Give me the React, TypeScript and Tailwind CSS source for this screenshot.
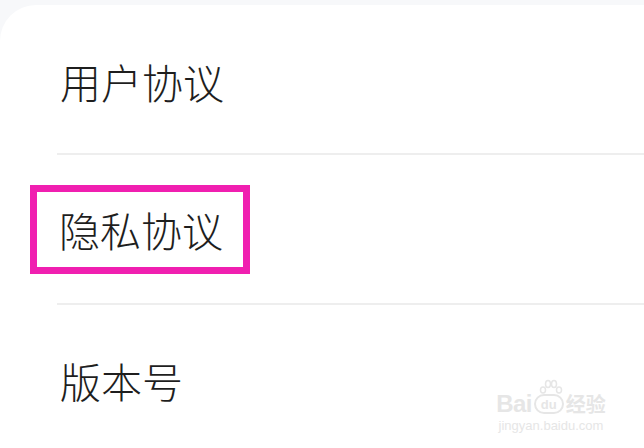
import React from 'react';

const rows = ['用户协议', '隐私协议', '版本号'];

export default function App() {
  return (
    <div className="relative h-[448px] w-[644px] overflow-hidden bg-[#f7f8fa] pt-[5px] font-['Noto_Sans_CJK_SC',sans-serif]">
      <div className="h-full rounded-tl-[36px] bg-white">
        {rows.map((label, i) => (
          <div key={label} className="pl-[57px]">
            <div
              className={`flex h-[150px] items-center ${i < rows.length - 1 ? 'border-b-2 border-[#eeeeee]' : ''} ${i === 0 ? 'pt-[4px]' : ''}`}
            >
              {i === 1 ? (
                <div className="-ml-[27px] flex h-[89px] w-[220px] items-center border-[7px] border-[#f01fb0] pl-[22px]">
                  <span className="text-[41px] leading-none font-light text-[#1e1e1e]">{label}</span>
                </div>
              ) : (
                <span className="pl-[3px] text-[41px] leading-none font-light text-[#1e1e1e]">{label}</span>
              )}
            </div>
          </div>
        ))}
      </div>

      {/* watermark */}
      <div className="absolute top-[378px] left-[492px] flex w-[118px] flex-col items-center gap-[5px] text-[#e6e6e6]">
        <div className="flex h-[36px] items-end">
          <span className="font-['Liberation_Sans',sans-serif] text-[24px] leading-[20px] font-bold tracking-tight">Bai</span>
          <span className="relative mx-[2px] flex h-[20px] w-[30px] items-center justify-center rounded-full border-2 border-[#e6e6e6] font-['Liberation_Sans',sans-serif] text-[13px] leading-none font-bold">
            du
            <svg className="absolute -top-[17px] left-[3px]" width="24" height="16" viewBox="0 0 24 16" fill="none" stroke="#e6e6e6" strokeWidth="1.5">
              <ellipse cx="4" cy="11" rx="2.5" ry="3" />
              <ellipse cx="9" cy="5" rx="2.5" ry="3.5" />
              <ellipse cx="15" cy="5" rx="2.5" ry="3.5" />
              <ellipse cx="20" cy="11" rx="2.5" ry="3" />
            </svg>
          </span>
          <span className="text-[20px] leading-[20px] font-bold">经验</span>
        </div>
        <span className="font-['Liberation_Sans',sans-serif] text-[13px] leading-[13px]">jingyan.baidu.com</span>
      </div>
    </div>
  );
}
